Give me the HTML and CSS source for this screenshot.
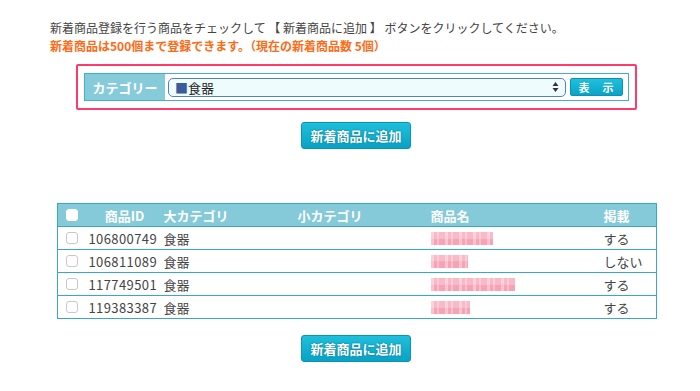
FILE: index.html
```html
<!DOCTYPE html>
<html lang="ja">
<head>
    <meta charset="UTF-8">
    <meta name="viewport" content="width=device-width, initial-scale=1.0">
    <title>新着商品登録</title>
    <link rel="stylesheet" href="styles.css">
</head>
<body>
    <div class="page">
        <p class="lead">新着商品登録を行う商品をチェックして 【 新着商品に追加 】 ボタンをクリックしてください。</p>
        <p class="notice">新着商品は500個まで登録できます。（現在の新着商品数 5個）</p>

        <div class="filter-box">
            <div class="filter-bar">
                <div class="filter-label">カテゴリー</div>
                <div class="select">
                    <span class="select-text"><span class="square">■</span>食器</span>
                    <svg class="select-arrows" width="7" height="12" viewBox="0 0 7 12">
                        <path d="M3.5 1 L6.5 5 L0.5 5 Z" fill="#333"/>
                        <path d="M3.5 11 L6.5 7 L0.5 7 Z" fill="#333"/>
                    </svg>
                </div>
                <button class="btn-show">表　示</button>
            </div>
        </div>

        <div class="actions">
            <button class="btn-add">新着商品に追加</button>
        </div>

        <table class="items">
            <colgroup>
                <col class="c-check">
                <col class="c-id">
                <col class="c-large">
                <col class="c-small">
                <col class="c-name">
                <col class="c-pub">
            </colgroup>
            <thead>
                <tr>
                    <th class="center"><input type="checkbox" class="check check-head"></th>
                    <th class="center">商品ID</th>
                    <th>大カテゴリ</th>
                    <th>小カテゴリ</th>
                    <th>商品名</th>
                    <th>掲載</th>
                </tr>
            </thead>
            <tbody>
                <tr>
                    <td class="center"><input type="checkbox" class="check"></td>
                    <td class="id">106800749</td>
                    <td>食器</td>
                    <td></td>
                    <td><span class="blur blur-a"></span></td>
                    <td>する</td>
                </tr>
                <tr>
                    <td class="center"><input type="checkbox" class="check"></td>
                    <td class="id">106811089</td>
                    <td>食器</td>
                    <td></td>
                    <td><span class="blur blur-b"></span></td>
                    <td>しない</td>
                </tr>
                <tr>
                    <td class="center"><input type="checkbox" class="check"></td>
                    <td class="id">117749501</td>
                    <td>食器</td>
                    <td></td>
                    <td><span class="blur blur-c"></span></td>
                    <td>する</td>
                </tr>
                <tr>
                    <td class="center"><input type="checkbox" class="check"></td>
                    <td class="id">119383387</td>
                    <td>食器</td>
                    <td></td>
                    <td><span class="blur blur-d"></span></td>
                    <td>する</td>
                </tr>
            </tbody>
        </table>

        <div class="actions bottom">
            <button class="btn-add">新着商品に追加</button>
        </div>
    </div>
</body>
</html>
```

FILE: styles.css
```css
body {
    margin: 0;
    background-color: #fff;
    color: #444;
    font-family: "Noto Sans CJK JP", "Noto Sans", sans-serif;
    font-size: 12px;
}
.page {
    width: 612px;
    padding: 19px 0 0 50px;
}
.lead, .notice {
    margin: 0;
    line-height: 18px;
}
.notice {
    color: #ff6a13;
    font-weight: bold;
}
.filter-box {
    margin: 9px 0 0 26px;
    width: 545px;
    padding: 7px 6px;
    border: 2px solid #ff3a6c;
    border-radius: 2px;
}
.filter-bar {
    display: flex;
    align-items: center;
    height: 26px;
    border: 1px solid #3fb0d0;
    background-color: #fff;
}
.filter-label {
    width: 80px;
    height: 100%;
    display: flex;
    align-items: center;
    justify-content: center;
    background-color: #86cbd9;
    color: #fff;
    font-weight: bold;
    font-size: 13px;
}
.select {
    margin-left: 3px;
    width: 398px;
    height: 19px;
    display: flex;
    align-items: center;
    justify-content: space-between;
    padding: 0 6px 0 6px;
    box-sizing: border-box;
    border: 1px solid #5b80b8;
    border-radius: 5px;
    background-color: #eefcfe;
    color: #222;
    font-size: 13px;
}
.square {
    color: #3a5a9a;
}
.btn-show {
    margin-left: 4px;
    width: 53px;
    height: 18px;
    padding: 0;
    border: 1px solid #0a93b6;
    border-radius: 2px;
    background: linear-gradient(#1fc0dc, #0aa3c6);
    color: #fff;
    font-family: inherit;
    font-size: 11px;
    font-weight: bold;
    letter-spacing: 1px;
}
.actions {
    display: flex;
    justify-content: center;
    margin-top: 12px;
}
.actions.bottom {
    margin-top: 16px;
}
.btn-add {
    width: 110px;
    height: 27px;
    padding: 0;
    border: 1px solid #0a93b6;
    border-radius: 3px;
    background: linear-gradient(#1fc0dc, #08a2c5);
    color: #fff;
    font-family: inherit;
    font-size: 13px;
    font-weight: bold;
    text-shadow: 0 0 2px #056b86;
}
.items {
    margin: 54px 0 0 7px;
    width: 599px;
    table-layout: fixed;
    border-collapse: collapse;
    border: 1px solid #37a8cc;
}
.c-check { width: 29px; }
.c-id { width: 76px; }
.c-large { width: 134px; }
.c-small { width: 133px; }
.c-name { width: 173px; }
.c-pub { width: 54px; }
.items th {
    height: 22px;
    padding: 0 0 0 1px;
    background-color: #85cad9;
    color: #fff;
    font-size: 13px;
    font-weight: bold;
    text-align: left;
}
.items td {
    height: 22px;
    padding: 0 0 0 1px;
    border-top: 1px solid #37a8cc;
    font-size: 13px;
    color: #444;
}
.items .center {
    text-align: center;
    padding: 0;
}
.items td.id {
    padding-left: 2px;
    letter-spacing: 0.4px;
}
.check {
    appearance: none;
    display: block;
    margin: 0 auto;
    width: 12px;
    height: 12px;
    border: 1px solid #c8c8c8;
    border-radius: 3px;
    background-color: #fff;
}
.check-head {
    border-color: #fff;
}
.blur {
    display: block;
    height: 13px;
    background:
        linear-gradient(90deg, rgba(255, 255, 255, 0.35) 0 20%, transparent 20% 45%, rgba(255, 255, 255, 0.3) 45% 55%, transparent 55%),
        linear-gradient(#f9b9c7 0 50%, #f7a3b5 50%);
    background-size: 14px 100%, 100% 100%;
}
.blur-a { width: 62px; background-color: #f6889d; }
.blur-b { width: 37px; }
.blur-c { width: 84px; }
.blur-d { width: 39px; }
```
